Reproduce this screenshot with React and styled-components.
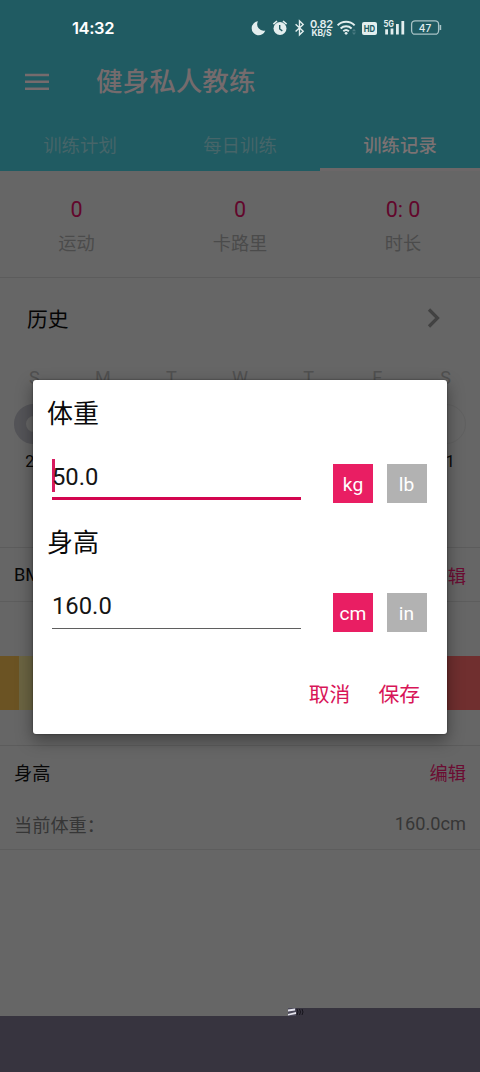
import React from "react";
import styled, { createGlobalStyle } from "styled-components";

const GlobalStyle = createGlobalStyle`
  * {
    box-sizing: border-box;
  }

  body {
    margin: 0;
    background: #37343f;
    font-family: Roboto, "Noto Sans CJK SC", sans-serif;
  }
`;

const Screen = styled.div`
  position: relative;
  width: 480px;
  height: 1072px;
  overflow: hidden;
  display: flex;
  flex-direction: column;
  background: #666666;
`;

const Header = styled.header`
  height: 171px;
  flex-shrink: 0;
  display: flex;
  flex-direction: column;
  background: #205b62;
`;

const StatusBar = styled.div`
  height: 56px;
  display: flex;
  align-items: center;
  justify-content: space-between;
  padding: 0 38px 0 72px;
`;

const Clock = styled.div`
  font-family: Inter, sans-serif;
  font-size: 16.5px;
  font-weight: 600;
  letter-spacing: -0.4px;
  color: #ffffff;
`;

const StatusIcons = styled.svg`
  width: 192px;
  height: 56px;
  font-family: Inter, sans-serif;
`;

const TitleBar = styled.div`
  height: 50px;
  display: flex;
  align-items: center;
  padding: 1px 0 0 25px;
  gap: 47px;
`;

const AppTitle = styled.h1`
  margin: 0;
  padding-top: 1px;
  font-size: 26.6px;
  line-height: 40px;
  font-weight: 500;
  color: #756b6d;
`;

const Tabs = styled.nav`
  flex: 1;
  display: grid;
  grid-template-columns: repeat(3, 1fr);
`;

const Tab = styled.div`
  display: flex;
  justify-content: center;
  padding-top: 26px;
  font-size: 18.4px;
  line-height: 28px;
  font-weight: ${(props) => (props.$active ? 500 : 400)};
  color: ${(props) => (props.$active ? "#7b7273" : "#466569")};
  border-bottom: ${(props) => (props.$active ? "3px solid #6c6768" : "none")};
`;

const Stats = styled.section`
  height: 107px;
  flex-shrink: 0;
  display: grid;
  grid-template-columns: 153px 174px 152px;
  padding-top: 23px;
  border-bottom: 1px solid #5c5c5c;
`;

const Stat = styled.div`
  display: flex;
  flex-direction: column;
  align-items: center;
  gap: 4px;
`;

const StatValue = styled.div`
  font-size: 21.5px;
  line-height: 32px;
  color: #62072c;
`;

const StatLabel = styled.div`
  font-size: 18.2px;
  line-height: 28px;
  color: #4b4b4b;
`;

const History = styled.section`
  height: 270px;
  flex-shrink: 0;
  border-bottom: 1px solid #5c5c5c;
`;

const HistoryHead = styled.div`
  height: 80px;
  display: flex;
  align-items: center;
  justify-content: space-between;
  padding: 0 40px 0 27px;
  font-size: 20.8px;
  color: #050505;
`;

const Week = styled.div`
  display: grid;
  grid-template-columns: repeat(7, 1fr);
  padding-top: 7px;
`;

const Day = styled.div`
  display: flex;
  flex-direction: column;
  align-items: center;
`;

const DayName = styled.div`
  font-size: 18px;
  line-height: 26px;
  height: 39px;
  color: #505050;
`;

const DayRing = styled.div`
  width: 40px;
  height: 40px;
  border-radius: 50%;
  border: ${(props) => (props.$past ? "12px solid #545458" : "1px solid #616161")};
`;

const DayNumber = styled.div`
  padding-top: 6px;
  font-size: 16px;
  line-height: 24px;
  color: #080808;
`;

const Row = styled.div`
  height: ${(props) => props.$height}px;
  flex-shrink: 0;
  display: flex;
  align-items: center;
  justify-content: space-between;
  padding: 0 14px ${(props) => props.$lift || 0}px;
  font-size: 18.2px;
  color: ${(props) => (props.$muted ? "#363636" : "#080808")};
  border-bottom: ${(props) => (props.$line ? "1px solid #5d5d5d" : "none")};
`;

const Edit = styled.span`
  color: #6b0c32;
`;

const Scale = styled.div`
  height: 144px;
  flex-shrink: 0;
  display: flex;
  align-items: flex-start;
  padding-top: 54px;
  border-bottom: 1px solid #5c5c5c;
`;

const Band = styled.div`
  width: ${(props) => props.$width}px;
  height: 54px;
  background: ${(props) => props.$color};
`;

const Bottom = styled.footer`
  margin-top: auto;
  height: 64px;
  flex-shrink: 0;
  display: flex;
  align-items: flex-end;
`;

const BottomPart = styled.div`
  width: ${(props) => props.$width}px;
  height: ${(props) => props.$height}px;
  background: #37343f;
`;

const BottomMark = styled.svg`
  width: 16px;
  height: 64px;
  background: #37343f;
`;

const Overlay = styled.div`
  position: absolute;
  inset: 0;
  display: flex;
  justify-content: center;
  align-items: flex-start;
  padding-top: 380px;
`;

const Dialog = styled.div`
  width: 414px;
  height: 354px;
  display: flex;
  flex-direction: column;
  padding: 15px 20px 0 14px;
  border-radius: 3px;
  background: #ffffff;
  box-shadow: 0 6px 16px 1px rgba(0, 0, 0, 0.35), 0 0 2px rgba(0, 0, 0, 0.5);
`;

const Measure = styled.div`
  height: 129px;
`;

const MeasureName = styled.h2`
  margin: 0;
  font-size: 26px;
  line-height: 38px;
  font-weight: 400;
  color: #0a0a0a;
`;

const MeasureRow = styled.div`
  display: flex;
  align-items: flex-start;
  padding: 25px 0 0 5px;
`;

const Field = styled.div`
  width: 249px;
  height: ${(props) => (props.$focused ? 42 : 42)}px;
  display: flex;
  align-items: flex-start;
  margin-right: 32px;
  border-bottom: ${(props) =>
    props.$focused ? "3px solid #d3054f" : "1px solid #5f5f5f"};
`;

const Caret = styled.span`
  width: 2.5px;
  height: 33px;
  margin: 1px -2.5px 0 0;
  background: #d81b60;
`;

const FieldText = styled.span`
  padding-top: 3px;
  font-size: 23.8px;
  line-height: 33px;
  color: #151515;
`;

const Unit = styled.button`
  width: 40px;
  height: 39px;
  margin: 6px 13.5px 0 0;
  padding: 2px 0 0;
  flex-shrink: 0;
  border: 0;
  font-family: inherit;
  font-size: 19.2px;
  color: #ffffff;
  background: ${(props) => (props.$on ? "#e91e63" : "#b2b2b2")};

  &:last-child {
    margin-right: 0;
  }
`;

const Actions = styled.div`
  display: flex;
  justify-content: flex-end;
  gap: 28px;
  padding: 26px 7px 0 0;
`;

const Action = styled.button`
  padding: 0;
  border: 0;
  background: none;
  font-family: inherit;
  font-size: 20.8px;
  line-height: 32px;
  color: #d81558;
`;

const days = [
  { name: "S", number: 25 },
  { name: "M", number: 26 },
  { name: "T", number: 27 },
  { name: "W", number: 28 },
  { name: "T", number: 29 },
  { name: "F", number: 30 },
  { name: "S", number: 31 },
];

const StatusGlyphs = () => (
  <StatusIcons viewBox="250 0 192 56" fill="none" stroke="#e3eeee">
    <path
      d="M258 21.3a7 7 0 1 0 7.3 9.2 6.4 6.4 0 0 1-7.3-9.2z"
      fill="#e3eeee"
      stroke="none"
    />
    <circle cx="280" cy="28.5" r="6.5" fill="#e3eeee" stroke="none" />
    <path d="M273.4 24.2l3.6-3.2M286.6 24.2l-3.6-3.2" strokeWidth="1.6" />
    <path d="M279.7 25v4l2.6 1.8" stroke="#205b62" strokeWidth="1.4" />
    <path d="M295.6 24.2l7.6 7-3.7 3.6V20.8l3.7 3.6-7.6 7" strokeWidth="1.4" />
    <g fill="#e3eeee" stroke="none" textAnchor="middle">
      <text x="321.5" y="28" fontSize="11" fontWeight="600" textLength="23">
        0.82
      </text>
      <text x="321.5" y="36" fontSize="8.5" fontWeight="700" textLength="20">
        KB/S
      </text>
    </g>
    <g strokeWidth="2">
      <path d="M337.6 25.4a12 12 0 0 1 17 0" />
      <path d="M340.6 28.5a8 8 0 0 1 11 0" />
      <path d="M343.3 31.3a4.2 4.2 0 0 1 5.6 0" />
    </g>
    <circle cx="346.1" cy="33.3" r="1.4" fill="#e3eeee" stroke="none" />
    <path
      d="M352 31.2l2-2.5 2 2.5zM352 32.6l2 2.5 2-2.5z"
      fill="#4b7b82"
      stroke="none"
    />
    <rect x="362" y="22" width="15" height="13" rx="2" fill="#e3eeee" stroke="none" />
    <text
      x="369.5"
      y="32"
      fontSize="9.5"
      fontWeight="700"
      textAnchor="middle"
      fill="#205b62"
      stroke="none"
      textLength="11.5"
      lengthAdjust="spacingAndGlyphs"
    >
      HD
    </text>
    <text
      x="383.5"
      y="26.8"
      fontSize="9"
      fontWeight="700"
      fill="#e3eeee"
      stroke="none"
      textLength="10.5"
      lengthAdjust="spacingAndGlyphs"
    >
      5G
    </text>
    <path
      d="M386.6 34.5v-5.2M392 34.5v-6M397.4 34.5V24M402.8 34.5V21"
      strokeWidth="2.8"
    />
    <rect
      x="411.6"
      y="20.8"
      width="27"
      height="13.4"
      rx="3.5"
      strokeWidth="1.3"
      stroke="#a9c3c6"
    />
    <path d="M440.4 25v5" strokeWidth="1.6" stroke="#a9c3c6" />
    <text
      x="425"
      y="31.6"
      fontSize="11"
      fontWeight="500"
      textAnchor="middle"
      fill="#e3eeee"
      stroke="none"
      textLength="12.5"
      lengthAdjust="spacingAndGlyphs"
    >
      47
    </text>
  </StatusIcons>
);

const MeasureField = ({ name, value, units, focused }) => (
  <Measure>
    <MeasureName>{name}</MeasureName>
    <MeasureRow>
      <Field $focused={focused}>
        {focused && <Caret />}
        <FieldText>{value}</FieldText>
      </Field>
      {units.map((unit, i) => (
        <Unit key={unit} $on={i === 0}>
          {unit}
        </Unit>
      ))}
    </MeasureRow>
  </Measure>
);

const App = () => {
  return (
    <Screen>
      <GlobalStyle />
      <Header>
        <StatusBar>
          <Clock>14:32</Clock>
          <StatusGlyphs />
        </StatusBar>
        <TitleBar>
          <svg width="24" height="18" viewBox="0 0 24 18" fill="#756b6d">
            <path d="M0 .8h24v2.5H0zM0 7.6h24v2.5H0zM0 14.5h24V17H0z" />
          </svg>
          <AppTitle>健身私人教练</AppTitle>
        </TitleBar>
        <Tabs>
          <Tab>训练计划</Tab>
          <Tab>每日训练</Tab>
          <Tab $active>训练记录</Tab>
        </Tabs>
      </Header>
      <Stats>
        <Stat>
          <StatValue>0</StatValue>
          <StatLabel>运动</StatLabel>
        </Stat>
        <Stat>
          <StatValue>0</StatValue>
          <StatLabel>卡路里</StatLabel>
        </Stat>
        <Stat>
          <StatValue>0: 0</StatValue>
          <StatLabel>时长</StatLabel>
        </Stat>
      </Stats>
      <History>
        <HistoryHead>
          历史
          <svg width="13" height="20" viewBox="0 0 13 20" fill="none">
            <path d="M2 1.5l8.5 8.5L2 18.5" stroke="#424242" strokeWidth="3.2" />
          </svg>
        </HistoryHead>
        <Week>
          {days.map((day, i) => (
            <Day key={day.number}>
              <DayName>{day.name}</DayName>
              <DayRing $past={i < 6} />
              <DayNumber>{day.number}</DayNumber>
            </Day>
          ))}
        </Week>
      </History>
      <Row $height={54} $line>
        BMI
        <Edit>编辑</Edit>
      </Row>
      <Scale>
        <Band $width={19} $color="#6b5323" />
        <Band $width={101} $color="#6b6442" />
        <Band $width={120} $color="#3f6238" />
        <Band $width={120} $color="#6b5323" />
        <Band $width={120} $color="#702f2f" />
      </Scale>
      <Row $height={54} $lift={3}>
        身高
        <Edit>编辑</Edit>
      </Row>
      <Row $height={50} $lift={2} $line $muted>
        <span>当前体重：</span>
        <span>160.0cm</span>
      </Row>
      <Bottom>
        <BottomPart $width={288} $height={56} />
        <BottomMark viewBox="0 0 16 64" fill="none">
          <path d="M0 0h8v8H0z" fill="#4a4858" />
          <path d="M0 1.5l7-1v2l-7 1zM0 6l8-2v2l-8 1.5z" fill="#e4e3ec" />
          <path
            d="M9 1q2 3 0 6M11.5 1q2 3 0 6M14 1q2 3 0 6"
            stroke="#16141c"
          />
        </BottomMark>
        <BottomPart $width={176} $height={64} />
      </Bottom>
      <Overlay>
        <Dialog>
          <MeasureField name="体重" value="50.0" units={["kg", "lb"]} focused />
          <MeasureField name="身高" value="160.0" units={["cm", "in"]} />
          <Actions>
            <Action>取消</Action>
            <Action>保存</Action>
          </Actions>
        </Dialog>
      </Overlay>
    </Screen>
  );
};

export default App;
